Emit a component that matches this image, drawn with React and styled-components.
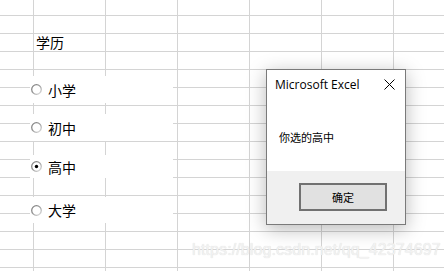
import React from "react";
import styled, { createGlobalStyle } from "styled-components";

const Global = createGlobalStyle`
  html, body { margin: 0; padding: 0; background: #fff; }
  body { font-family: "Noto Sans CJK SC", "Liberation Sans", sans-serif; }
`;

const COLS = 7;
const ROWS = 16;

const Sheet = styled.div`
  position: relative;
  width: 444px;
  height: 271px;
  overflow: hidden;
  background: #fff;
`;

const Grid = styled.div`
  display: grid;
  grid-template-columns: 34px repeat(${COLS - 1}, 72px);
  grid-template-rows: 16px repeat(${ROWS - 1}, 18px);
`;

const Cell = styled.div`
  box-sizing: border-box;
  border-right: 1px solid #d4d4d4;
  border-bottom: 1px solid #d4d4d4;
  display: flex;
  align-items: flex-end;
  padding-left: 2px;
  font-family: "Noto Sans CJK SC", sans-serif;
  font-size: 14px;
  line-height: 17px;
  color: #000;
  white-space: nowrap;
`;

const RadioBox = styled.label`
  position: absolute;
  left: 30px;
  top: ${(p) => p.$top}px;
  width: 143px;
  height: ${(p) => p.$h}px;
  background: #fff;
  display: flex;
  align-items: center;
  gap: 6px;
  padding-left: 1px;
  box-sizing: border-box;
  font-family: "Noto Sans CJK SC", sans-serif;
  font-size: 14px;
  color: #000;
`;

const RadioDot = ({ checked }) => (
  <svg width="11" height="11" viewBox="0 0 11 11">
    <defs>
      <linearGradient id="rg" x1="0" y1="0" x2="1" y2="1">
        <stop offset="0" stopColor="#7a7a7a" />
        <stop offset="0.5" stopColor="#9a9a9a" />
        <stop offset="1" stopColor="#e4e4e4" />
      </linearGradient>
    </defs>
    <circle cx="5.5" cy="5.5" r="4.8" fill="#fff" stroke="url(#rg)" strokeWidth="1.3" />
    {checked && <circle cx="5.5" cy="5.5" r="1.7" fill="#000" />}
  </svg>
);

const Dialog = styled.div`
  position: absolute;
  left: 266px;
  top: 69px;
  width: 140px;
  height: 156px;
  box-sizing: border-box;
  border: 1px solid #7a7a7a;
  background: #fff;
  box-shadow: 0 4px 18px rgba(0, 0, 0, 0.28);
  display: flex;
  flex-direction: column;
`;

const TitleBar = styled.div`
  display: flex;
  justify-content: space-between;
  align-items: center;
  height: 29px;
  padding: 0 10px 0 8px;
  box-sizing: border-box;
  font-family: "Open Sans", "Liberation Sans", sans-serif;
  font-size: 12px;
  color: #000;
`;

const Body = styled.div`
  flex: 1;
  padding: 31px 0 0 12px;
  font-family: "Noto Sans CJK SC", sans-serif;
  font-size: 11px;
  line-height: 14px;
  color: #000;
`;

const Footer = styled.div`
  height: 53px;
  background: #f0f0f0;
  display: flex;
  justify-content: flex-end;
  align-items: flex-start;
  padding: 12px 18px 0 0;
  box-sizing: border-box;
`;

const Button = styled.button`
  width: 88px;
  height: 28px;
  box-sizing: border-box;
  border: 2px solid #717171;
  background: #e1e1e1;
  font-family: "Noto Sans CJK SC", sans-serif;
  font-size: 11px;
  color: #000;
  padding: 0;
  display: flex;
  align-items: center;
  justify-content: center;
`;

const Watermark = styled.div`
  position: absolute;
  left: 192px;
  top: 241px;
  font-family: "Liberation Sans", sans-serif;
  font-size: 16px;
  color: #f2f2f2;
  text-shadow: 0 0 1px #d6d6d6;
  letter-spacing: 0.1px;
  white-space: nowrap;
`;

const CloseIcon = () => (
  <svg width="11" height="11" viewBox="0 0 11 11">
    <path d="M0.5 0.5 L10.5 10.5 M10.5 0.5 L0.5 10.5" stroke="#000" strokeWidth="1" />
  </svg>
);

const radios = [
  { label: "小学", top: 76, h: 27 },
  { label: "初中", top: 114, h: 27 },
  { label: "高中", top: 155, h: 23, checked: true },
  { label: "大学", top: 197, h: 26 },
];

export default function App() {
  const cells = [];
  for (let r = 0; r < ROWS; r++) {
    for (let c = 0; c < COLS; c++) {
      const text = r === 2 && c === 1 ? "学历" : "";
      cells.push(<Cell key={`${r}-${c}`}>{text}</Cell>);
    }
  }
  return (
    <>
      <Global />
      <Sheet>
        <Grid>{cells}</Grid>
        {radios.map((r) => (
          <RadioBox key={r.label} $top={r.top} $h={r.h}>
            <RadioDot checked={r.checked} />
            <span>{r.label}</span>
          </RadioBox>
        ))}
        <Dialog>
          <TitleBar>
            <span>Microsoft Excel</span>
            <CloseIcon />
          </TitleBar>
          <Body>你选的高中</Body>
          <Footer>
            <Button>确定</Button>
          </Footer>
        </Dialog>
        <Watermark>https://blog.csdn.net/qq_42374697</Watermark>
      </Sheet>
    </>
  );
}
